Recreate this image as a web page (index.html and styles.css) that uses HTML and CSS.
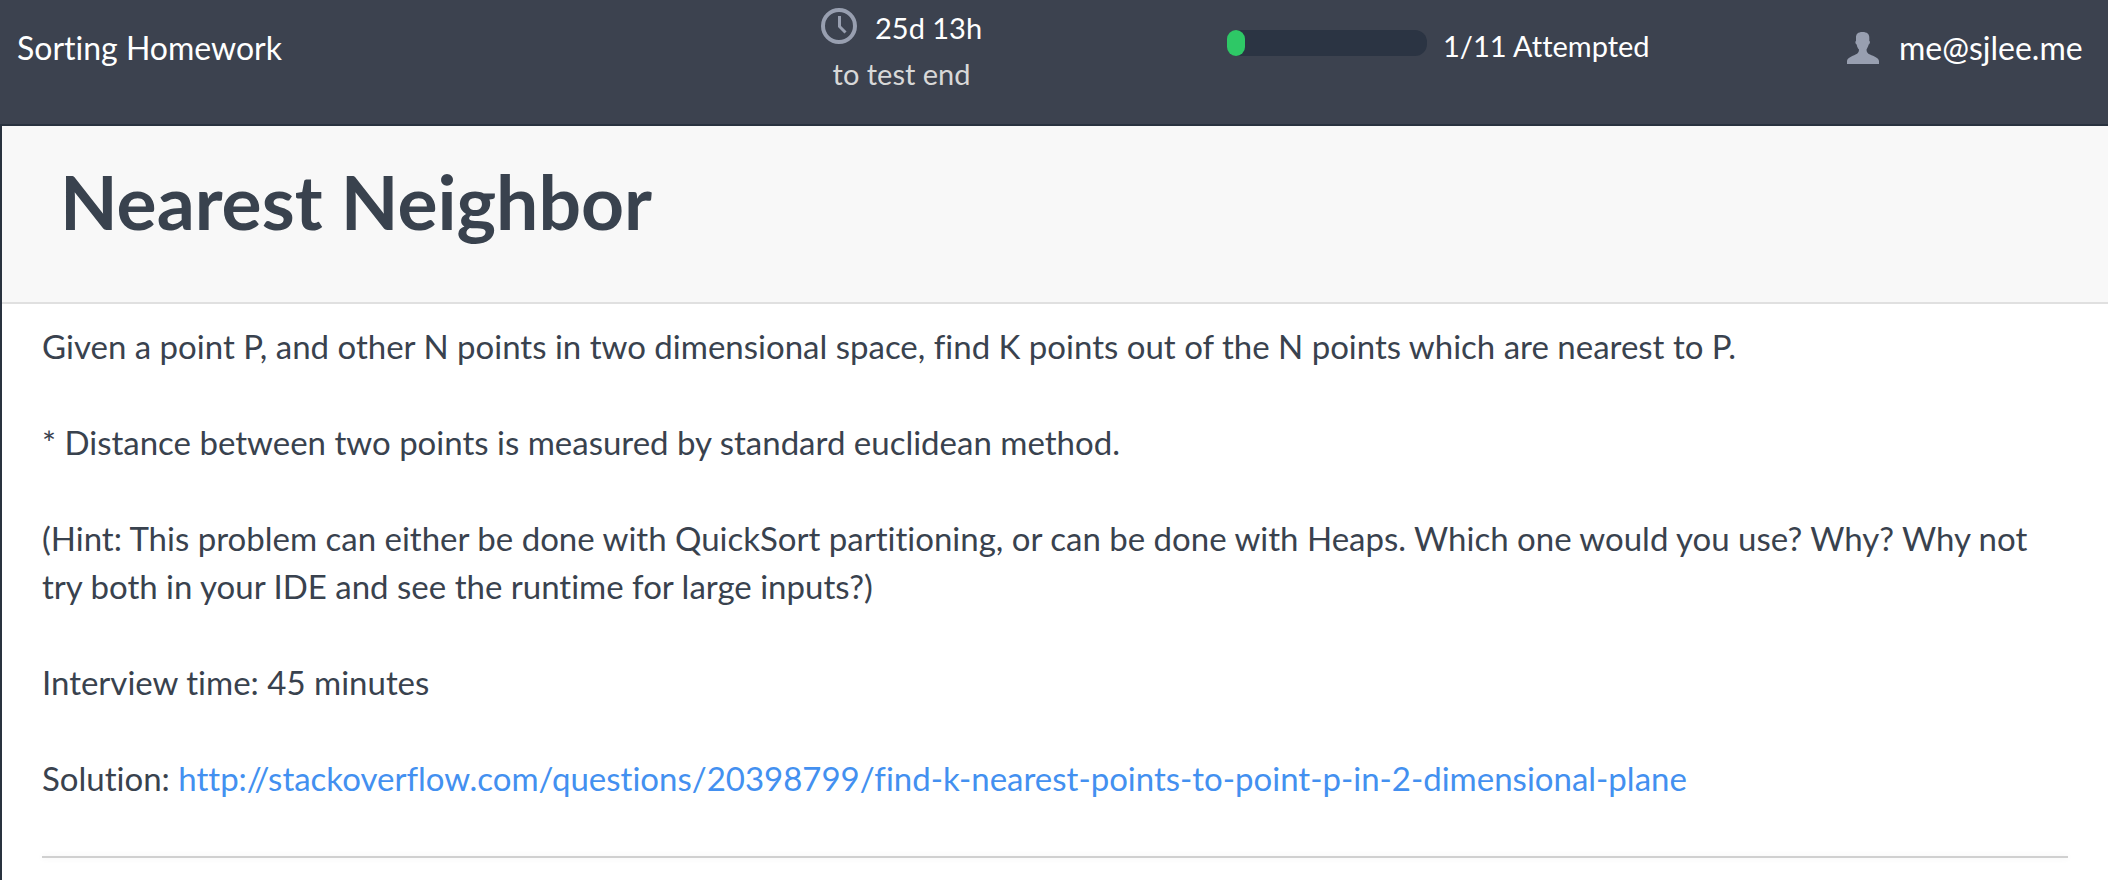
FILE: index.html
```html
<!DOCTYPE html>
<html lang="en">
<head>
<meta charset="utf-8">
<meta name="viewport" content="width=device-width, initial-scale=1">
<title>Nearest Neighbor</title>
<link rel="stylesheet" href="styles.css">
</head>
<body>
<header class="topbar">
  <div class="test-name">Sorting Homework</div>
  <div class="timer">
    <div class="timer-left">
      <svg class="clock" viewBox="0 0 36 36" aria-hidden="true">
        <circle cx="18" cy="18" r="16" fill="none" stroke="currentColor" stroke-width="4"/>
        <path d="M18.500 8v10.500l6 6" fill="none" stroke="currentColor" stroke-width="3"/>
      </svg>
      <span>25d 13h</span>
    </div>
    <div class="timer-note">to test end</div>
  </div>
  <div class="progress">
    <div class="track" role="progressbar" aria-label="Attempted" aria-valuemin="0" aria-valuemax="11" aria-valuenow="1">
      <div class="fill" style="width: 9%"></div>
    </div>
    <span class="attempted">1/11 Attempted</span>
  </div>
  <div class="user">
    <svg class="person" viewBox="0 0 32 32" aria-hidden="true">
      <path fill="currentColor" d="M15.500 0C20 0 22.500 2 22.300 6V9C23.500 9 23 12 21.700 12.500C21 15 20 16.500 19.500 17.500C19.500 20 20.500 21.500 23 22.500C27 24.500 31.500 25.500 32 29V32H0V29C.5 25.500 5 24.500 8.500 22.500C11 21.500 12 20 12 17.500C11 16.500 10 15 9.700 12.500C8.300 12 8 9 9 9V6C8.800 2 11 0 15.500 0Z"/>
    </svg>
    <span>me@sjlee.me</span>
  </div>
</header>
<main class="question">
  <div class="question-head">
    <h1 class="question-title">Nearest Neighbor</h1>
  </div>
  <div class="question-body">
    <p>Given a point P, and other N points in two dimensional space, find K points out of the N points which are nearest to P.</p>
    <p>* Distance between two points is measured by standard euclidean method.</p>
    <p>(Hint: This problem can either be done with QuickSort partitioning, or can be done with Heaps. Which one would you use? Why? Why not try both in your IDE and see the runtime for large inputs?)</p>
    <p>Interview time: 45 minutes</p>
    <p>Solution: <a class="link" href="http://stackoverflow.com/questions/20398799/find-k-nearest-points-to-point-p-in-2-dimensional-plane">http://stackoverflow.com/questions/20398799/find-k-nearest-points-to-point-p-in-2-dimensional-plane</a></p>
    <hr class="rule">
  </div>
</main>
</body>
</html>
```
FILE: styles.css
```css
* {
  box-sizing: border-box;
}

body {
  display: flex;
  flex-direction: column;
  min-height: 100vh;
  margin: 0;
  background: #fff;
  color: #39424e;
  font-family: Lato, "Open Sans", sans-serif;
  font-size: 33px;
  font-weight: 400;
  font-variant-ligatures: none;
  line-height: 48px;
}

.topbar {
  display: grid;
  grid-template-columns: 804fr 406fr 620fr 241fr;
  padding: 4px 20px 28px 17px;
  border-bottom: 2px solid #29323f;
  background: #3c424f;
  color: #fff;
  font-size: 32px;
}

.test-name {
  padding-top: 20px;
}

.timer {
  justify-self: start;
  font-size: 29px;
  line-height: 48px;
  text-align: center;
}

.timer-left {
  display: flex;
  align-items: flex-start;
  gap: 18px;
}

.timer-note {
  color: #d8d8d8;
  line-height: 44px;
}

.clock {
  width: 36px;
  height: 36px;
  margin-top: 4px;
  color: #989fb0;
}

.progress {
  display: flex;
  align-items: flex-start;
  gap: 16px;
  font-size: 29px;
}

.track {
  width: 200px;
  height: 26px;
  margin-top: 26px;
  border-radius: 12px;
  background: #2b3443;
}

.fill {
  height: 100%;
  border-radius: 9px;
  background: #2ec866;
}

.attempted {
  padding-top: 18px;
}

.user {
  display: flex;
  align-items: flex-start;
  gap: 20px;
  padding-top: 20px;
}

.person {
  width: 32px;
  height: 32px;
  margin-top: 8px;
  color: #989fb0;
}

.question {
  flex: 1;
  border-left: 2px solid #29323f;
}

.question-head {
  padding: 34px 58px 60px;
  border-bottom: 2px solid #e0e0e0;
  background: #f8f8f8;
}

.question-title {
  margin: 0;
  font-size: 75px;
  font-weight: 700;
  line-height: 82px;
}

.question-body {
  padding: 18px 40px;
}

.question-body p {
  margin: 0 0 48px;
}

.link {
  color: #4390f0;
  text-decoration: none;
}

.question-body .rule {
  height: 2px;
  margin: 54px 0 0;
  border: 0;
  background: #d0d0d0;
  box-shadow: 0 0 6px rgba(0, 0, 0, 0.08);
}
```
